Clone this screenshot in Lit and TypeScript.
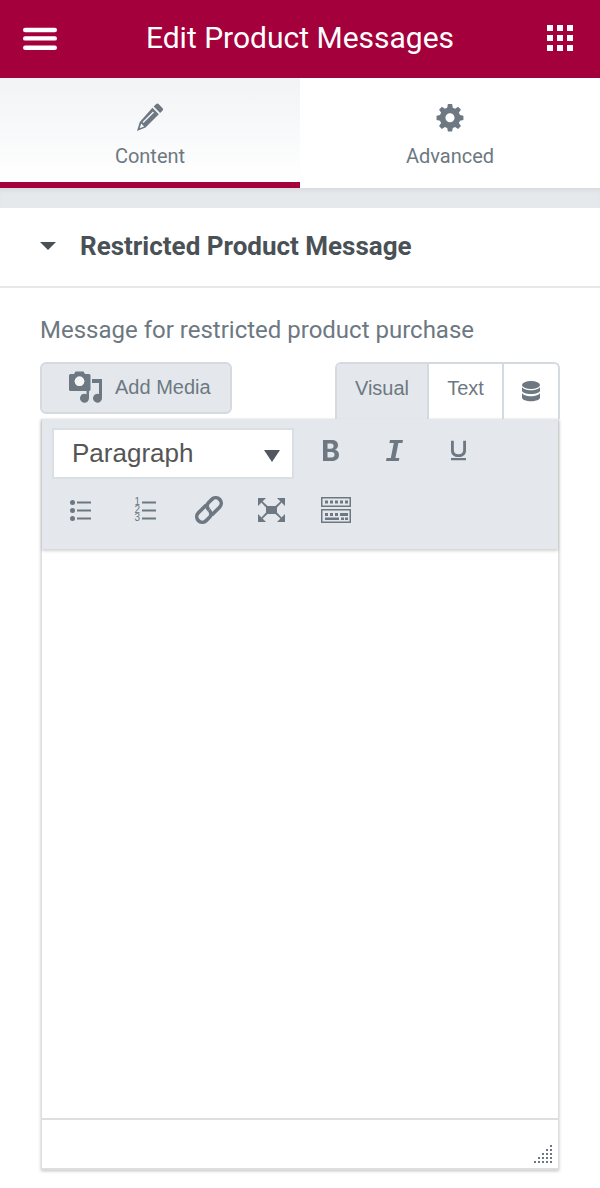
import { LitElement, html, css, svg } from "lit";
import { customElement } from "lit/decorators.js";

const icon = (w: number, h: number, vb: string, body: unknown, cls = "") =>
  html`<svg class=${cls} width=${w} height=${h} viewBox=${vb} fill="#6d7882">${body}</svg>`;

const arrow = svg`<path d="M0 0h8L0 8z"/><path d="M3 2 9.500 8 8 9.500 2 3z"/>`;

@customElement("app-root")
export class AppRoot extends LitElement {
  static styles = css`
    :host { display: block; width: 600px; height: 1188px; background: #fff; overflow: hidden; font-family: Roboto, sans-serif; color: #6d7882; }
    * { box-sizing: border-box; }
    svg { display: block; flex: none; }
    .header { height: 78px; background: #a4003c; color: #fff; display: grid; grid-template-columns: 1fr auto 1fr; align-items: center; padding: 0 27px 3px; }
    .header h1 { margin: 0; font-size: 30px; font-weight: 400; line-height: 34px; white-space: nowrap; }
    .menu-icon { margin-left: -4px; }
    .grid-icon { justify-self: end; }
    .tabs { display: flex; height: 110px; }
    .tab { flex: 1; display: flex; flex-direction: column; align-items: center; padding-top: 25px; gap: 11px; font-size: 20px; line-height: 26px; background: #fff; }
    .tab.active { background: linear-gradient(#f1f3f5, #fff); border-bottom: 6px solid #a4003c; }
    .strip { height: 20px; background: #e6e9ec; box-shadow: inset 0 5px 5px -3px #d5d8dc; }
    .section { height: 80px; display: flex; align-items: center; gap: 24px; padding: 0 40px 2px; border-bottom: 2px solid #e6e9ec; color: #495157; font-size: 26px; font-weight: 700; }
    .caret { width: 0; height: 0; border: 8px solid transparent; border-top: 8px solid #495157; border-bottom: 0; }
    .body { padding: 29px 40px 0; }
    .label { font-size: 24px; line-height: 26px; margin-bottom: 19px; white-space: nowrap; }
    .mediarow { display: flex; justify-content: space-between; align-items: flex-start; height: 57px; font-family: "Liberation Sans", sans-serif; font-size: 20px; }
    .addmedia { width: 192px; height: 52px; background: #e4e8ec; border: 2px solid #d5dadf; border-radius: 6px; display: flex; align-items: center; gap: 13px; padding: 0 0 2px 27px; }
    .switch { display: flex; height: 57px; width: 225px; border: 2px solid #d5dadf; border-bottom: 0; border-radius: 6px 6px 0 0; overflow: hidden; }
    .switch > div { display: flex; align-items: center; justify-content: center; padding-bottom: 6px; }
    .visual { width: 92px; background: #e4e8ec; border-right: 2px solid #d5dadf; }
    .text { width: 75px; border-right: 2px solid #d5dadf; }
    .switch > .db { flex: 1; padding-bottom: 0; }
    .editor { margin-left: 1px; width: 518px; height: 751px; border: 2px solid #dedede; border-top: 0; border-left-width: 1px; border-right-width: 1px; box-shadow: 0 1px 3px rgba(0,0,0,.25); display: flex; flex-direction: column; }
    .toolbar { height: 130px; background: #e4e8ec; box-shadow: 0 2px 3px rgba(0,0,0,.18); padding: 9px 10px 0; display: flex; flex-direction: column; position: relative; }
    .row1 { display: flex; align-items: flex-start; height: 52px; }
    .select { width: 242px; height: 51px; background: #fff; border: 2px solid #dadfe3; display: flex; align-items: center; justify-content: space-between; padding: 0 12px 1px 18px; font-family: "Liberation Sans", sans-serif; font-size: 26px; color: #555; }
    .sel-caret { width: 0; height: 0; border: 8px solid transparent; border-top: 12px solid #50575e; border-bottom: 0; margin-top: 5px; }
    .fmt { display: flex; margin-left: 4px; margin-top: 12px; }
    .btn { width: 64px; display: flex; justify-content: center; align-items: center; }
    .row2 { display: flex; margin-top: 8px; height: 44px; margin-left: -3px; align-items: center; }
    .digits { font-family: "Liberation Sans", sans-serif; font-size: 10px; line-height: 8px; white-space: pre-line; width: 7px; color: #6d7882; }
    .numlist { display: flex; align-items: center; }
    .shift3 { margin-right: 3px; }
    .shift2 { margin-right: 2px; }
    .nudge { margin-left: 2px; }
    .content { flex: 1; background: #fff; }
    .status { height: 50px; border-top: 2px solid #dedede; background: #fff; display: flex; justify-content: flex-end; align-items: flex-end; padding: 0 4px 5px 0; }
  `;

  render() {
    return html`
      <div class="header">
        <svg class="menu-icon" width="34" height="24" viewBox="0 0 34 24" fill="#fff"><rect width="34" height="4.400" rx="2.200" y="1.800"/><rect width="34" height="4.400" rx="2.200" y="10.200"/><rect width="34" height="4.400" rx="2.200" y="19.500"/></svg>
        <h1>Edit Product Messages</h1>
        <svg class="grid-icon" width="26" height="26" viewBox="0 0 26 26" fill="#fff">${[0, 10, 20].map((y) => [0, 10, 20].map((x) => svg`<rect x=${x} y=${y} width="6" height="6"/>`))}</svg>
      </div>
      <div class="tabs">
        <div class="tab active">
          ${icon(28, 29, "0 0 28 29", svg`<path d="M20 1.200a2 2 0 0 1 2.800 0l3.600 3.700a2 2 0 0 1 0 2.800l-2.300 2.300-6.400-6.500zM16.400 4.800l6.400 6.500L9.500 24.600 1 28l2.800-9zM5.200 20.500l-1.500 4.700 4.400-1.700z" fill-rule="evenodd"/><path d="M6.500 19 17 8.500l1 1L7.500 20z" fill="#f5f6f8"/>`)}
          <span>Content</span>
        </div>
        <div class="tab">
          ${icon(28, 29, "0 0 24 24", svg`<path fill-rule="evenodd" d="M10.200.5h3.600l.6 3.100c.7.2 1.400.5 2 .9l2.600-1.800 2.400 2.600-1.800 2.500c.4.7.7 1.400.9 2.100l3 .6v3.600l-3 .6c-.2.7-.5 1.400-.9 2.100l1.800 2.500-2.400 2.600-2.600-1.800c-.6.4-1.300.7-2 .9l-.6 3.100h-3.600l-.6-3.100c-.7-.2-1.400-.5-2-.9l-2.600 1.800-2.400-2.600 1.800-2.500c-.4-.7-.7-1.400-.9-2.100l-3-.6v-3.600l3-.6c.2-.7.5-1.400.9-2.100L2.600 5.300 5 2.700l2.600 1.800c.6-.4 1.300-.7 2-.9zM12 8.300a3.900 3.900 0 1 0 0 7.800 3.900 3.900 0 0 0 0-7.800z"/>`)}
          <span>Advanced</span>
        </div>
      </div>
      <div class="strip"></div>
      <div class="section"><span class="caret"></span><span>Restricted Product Message</span></div>
      <div class="body">
        <div class="label">Message for restricted product purchase</div>
        <div class="mediarow">
          <div class="addmedia">
            ${icon(33, 32, "0 0 33 32", svg`<path fill-rule="evenodd" d="M5 3 6.500.5h8L16 3h4a1.500 1.500 0 0 1 1.500 1.500v14A1.500 1.500 0 0 1 20 20H1.500A1.500 1.500 0 0 1 0 18.500v-14A1.500 1.500 0 0 1 1.500 3zM10.500 5.500a4.800 4.800 0 1 0 0 9.600 4.800 4.800 0 0 0 0-9.600z"/><circle cx="10.500" cy="10.300" r="4.800" fill="#f4f5f7"/><path d="M17.500 19H20v8.200a4.500 4.500 0 1 1-2.500-4z"/><path d="M23 8h10v19.200a4.500 4.500 0 1 1-3-4.200V12h-7z"/>`)}
            <span>Add Media</span>
          </div>
          <div class="switch">
            <div class="visual">Visual</div>
            <div class="text">Text</div>
            <div class="db">${icon(18, 21, "0 0 18 21", svg`<ellipse cx="9" cy="4" rx="9" ry="4"/><path d="M0 6c1 2 4.500 3.200 9 3.200S17 8 18 6v3.500c0 2-4 3.500-9 3.500S0 11.500 0 9.500zM0 12c1 2 4.500 3.200 9 3.200S17 14 18 12v4.500c0 2.200-4 3.700-9 3.700S0 18.700 0 16.500z"/>`)}</div>
          </div>
        </div>
        <div class="editor">
          <div class="toolbar">
            <div class="row1">
              <div class="select"><span>Paragraph</span><span class="sel-caret"></span></div>
              <div class="fmt">
                <div class="btn">${icon(16, 21, "0 0 16 21", svg`<path fill-rule="evenodd" d="M0 0h8.500c4 0 6.500 1.700 6.500 5.200 0 2.200-1.200 3.800-3 4.500 2.500.6 4 2.400 4 5 0 3.900-2.800 6.300-7 6.300H0zM4.500 3.500v5.200h3.300c2 0 2.800-1 2.800-2.600S9.700 3.500 7.800 3.500zM4.500 12v5.500h4c2 0 3-1 3-2.800S10.500 12 8.500 12z"/>`, "nudge")}</div>
                <div class="btn">${icon(17, 21, "0 0 17 21", svg`<path d="M4 0h13l-.6 3h-4l-3 15h4l-.6 3H0l.6-3h4.200l3-15H3.400z"/>`)}</div>
                <div class="btn">${icon(15, 21, "0 0 16 21", svg`<path d="M0 0h3v10c0 3 1.800 4.500 5 4.500s5-1.500 5-4.500V0h3v10.500c0 4.500-3 7-8 7s-8-2.500-8-7zM0 18.500h16V21H0z"/>`)}</div>
              </div>
            </div>
            <div class="row2">
              <div class="btn">${icon(21, 21, "0 0 21 21", svg`<circle cx="2.500" cy="2.500" r="2.500"/><circle cx="2.500" cy="10.500" r="2.500"/><circle cx="2.500" cy="18.500" r="2.500"/><path d="M7 1.500h14v2H7zM7 9.500h14v2H7zM7 17.500h14v2H7z"/>`, "shift2")}</div>
              <div class="btn"><div class="numlist"><div class="digits">1
2
3</div>${icon(14, 21, "0 0 14 21", svg`<path d="M0 1.500h14v2H0zM0 9.500h14v2H0zM0 17.500h14v2H0z"/>`)}</div></div>
              <div class="btn">${html`<svg width="28" height="28" viewBox="0 0 28 28" fill="none" stroke="#6d7882" stroke-width="3.600"><g transform="translate(14 14) rotate(-45)"><path d="M2-5.500H-9.500A5.500 5.500 0 0 0-9.500 5.500H-4A5.500 5.500 0 0 0 0 0"/><path d="M-2 5.500H9.500A5.500 5.500 0 0 0 9.500-5.500H4A5.500 5.500 0 0 0 0 0"/></g></svg>`}</div>
              <div class="btn">${icon(27, 24, "0 0 27 24", svg`<rect x="8" y="8" width="11" height="8"/>${arrow}<g transform="translate(27 0) scale(-1 1)">${arrow}</g><g transform="translate(0 24) scale(1 -1)">${arrow}</g><g transform="translate(27 24) scale(-1 -1)">${arrow}</g>`, "shift3")}</div>
              <div class="btn">${icon(30, 26, "0 0 30 26", svg`<path fill-rule="evenodd" d="M0 0h30v10H0zM1.500 1.500v7h27v-7zM0 12h30v14H0zM1.500 13.500v11h27v-11z"/>${[4, 9, 14, 19, 24].map((x) => svg`<rect x=${x} y="3.500" width="3" height="3"/>`)}${[4, 9, 14].map((x) => svg`<rect x=${x} y="16" width="3" height="3"/>`)}<rect x="19" y="16" width="8" height="3"/><rect x="4" y="20.500" width="14" height="2.500"/><rect x="20" y="20.500" width="3" height="2.500"/><rect x="24" y="20.500" width="3" height="2.500"/>`, "shift2")}</div>
            </div>
          </div>
          <div class="content"></div>
          <div class="status">
            <svg width="20" height="20" viewBox="0 0 20 20" fill="#6d7882">${[[16,0],[12,4],[16,4],[8,8],[12,8],[16,8],[4,12],[8,12],[12,12],[16,12],[0,16],[4,16],[8,16],[12,16],[16,16]].map(([x,y]) => svg`<rect x=${x} y=${y+2} width="2" height="2"/>`)}</svg>
          </div>
        </div>
      </div>
    `;
  }
}
